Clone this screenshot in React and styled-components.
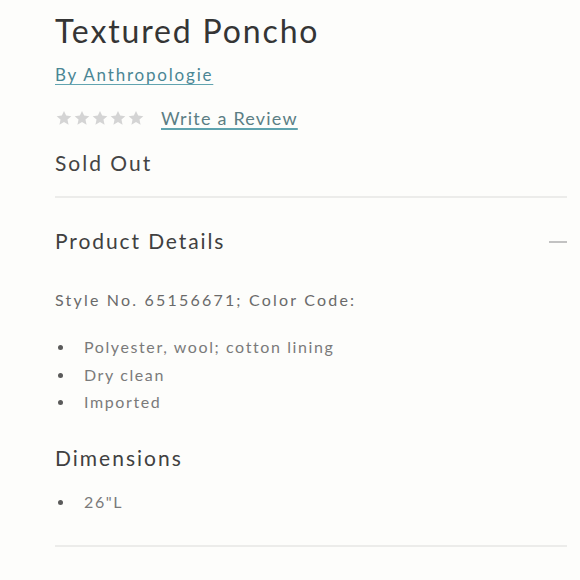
import React from 'react';
import styled, { createGlobalStyle } from 'styled-components';

const GlobalStyle = createGlobalStyle`
  body {
    margin: 0;
    background: #fdfdfb;
    font-family: Lato, "Liberation Sans", sans-serif;
    color: #3d3d3d;
  }
`;

const Page = styled.div`
  width: 512px;
  padding: 11px 13px 0 55px;
`;

const Title = styled.h1`
  margin: 0;
  font-size: 32px;
  font-weight: 400;
  line-height: 40px;
  color: #353535;
  letter-spacing: 1.85px;
`;

const Brand = styled.a`
  display: block;
  width: fit-content;
  margin-top: 12px;
  font-size: 17px;
  line-height: 24px;
  letter-spacing: 1.8px;
  color: #4a8694;
  text-decoration: underline;
  text-decoration-color: #62a4b0;
  text-underline-offset: 3px;
`;

const ReviewRow = styled.div`
  display: flex;
  align-items: center;
  gap: 16px;
  margin-top: 18px;
  height: 26px;
`;

const Stars = styled.div`
  display: flex;
`;

const ReviewLink = styled.a`
  font-size: 18px;
  letter-spacing: 1.2px;
  color: #5b7d84;
  text-decoration: underline;
  text-decoration-color: #5fa3ae;
  text-decoration-thickness: 2px;
  text-underline-offset: 3px;
`;

const Status = styled.div`
  margin-top: 18px;
  font-size: 21px;
  line-height: 28px;
  letter-spacing: 2px;
  color: #444;
`;

const Divider = styled.hr`
  margin: ${p => p.$top || 0}px 0 0;
  border: 0;
  border-top: 2px solid #ececea;
`;

const SectionHeader = styled.div`
  display: flex;
  justify-content: space-between;
  align-items: center;
  margin-top: 27px;
  height: 30px;
`;

const SectionTitle = styled.h2`
  margin: 0;
  font-size: 21px;
  font-weight: 400;
  letter-spacing: 1.9px;
  color: #404040;
`;

const Minus = styled.span`
  width: 18px;
  height: 2px;
  margin-top: 3px;
  background: #c2c2c2;
`;

const StyleNo = styled.p`
  margin: 34px 0 0;
  font-size: 16px;
  line-height: 22px;
  letter-spacing: 2.2px;
  color: #6a6a6a;
`;

const List = styled.ul`
  margin: ${p => p.$top}px 0 0;
  padding: 0;
  list-style: none;
`;

const Item = styled.li`
  position: relative;
  padding-left: 29px;
  font-size: 16px;
  line-height: 27.5px;
  letter-spacing: 1.6px;
  color: #7a7a7a;

  &::before {
    content: '';
    position: absolute;
    left: 3px;
    top: 12px;
    width: 5px;
    height: 5px;
    border-radius: 50%;
    background: #5a5a5a;
  }
`;

const SubTitle = styled.h3`
  margin: 27px 0 0;
  font-size: 21px;
  font-weight: 400;
  line-height: 30px;
  letter-spacing: 2px;
  color: #404040;
`;

const Star = () => (
  <svg width="18" height="18" viewBox="0 0 24 24" fill="#d4d4d4">
    <path d="M12 2.5l2.9 6.3 6.9.7-5.2 4.6 1.5 6.8L12 17.4l-6.1 3.5 1.5-6.8L2.2 9.5l6.9-.7z" />
  </svg>
);

export default function App() {
  return (
    <>
      <GlobalStyle />
      <Page>
        <Title>Textured Poncho</Title>
        <Brand>By Anthropologie</Brand>
        <ReviewRow>
          <Stars>
            {[0, 1, 2, 3, 4].map(i => <Star key={i} />)}
          </Stars>
          <ReviewLink>Write a Review</ReviewLink>
        </ReviewRow>
        <Status>Sold Out</Status>
        <Divider $top={19} />
        <SectionHeader>
          <SectionTitle>Product Details</SectionTitle>
          <Minus />
        </SectionHeader>
        <StyleNo>Style No. 65156671; Color Code:</StyleNo>
        <List $top={22}>
          <Item>Polyester, wool; cotton lining</Item>
          <Item>Dry clean</Item>
          <Item>Imported</Item>
        </List>
        <SubTitle>Dimensions</SubTitle>
        <List $top={15}>
          <Item>26"L</Item>
        </List>
        <Divider $top={30} />
      </Page>
    </>
  );
}
